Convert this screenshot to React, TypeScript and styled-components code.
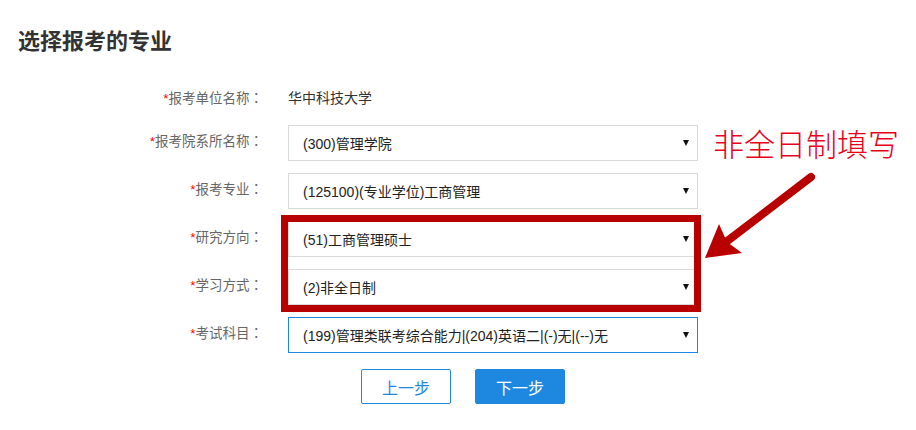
import React from "react";
import styled, { createGlobalStyle } from "styled-components";

const Global = createGlobalStyle`
  html, body { margin: 0; padding: 0; background: #fff; }
  body { font-family: "Liberation Sans", "Noto Sans CJK SC", sans-serif; }
`;

const Page = styled.div`
  position: relative;
  width: 916px;
  height: 430px;
  overflow: hidden;
`;

const Title = styled.h2`
  margin: 0;
  padding: 25px 0 0 18px;
  font-family: "Noto Sans CJK SC", sans-serif;
  font-size: 22px;
  line-height: 28px;
  font-weight: 700;
  color: #333;
`;

const Form = styled.div`
  display: flex;
  flex-direction: column;
  gap: 12px;
  margin-top: 27px;
`;

const Row = styled.div<{ $tight?: boolean }>`
  display: grid;
  grid-template-columns: 263px 410px;
  column-gap: 25px;
  align-items: center;
  height: 36px;
  margin-bottom: ${(p) => (p.$tight ? "-3px" : "0")};
`;

const Label = styled.div<{ $plain?: boolean }>`
  text-align: right;
  font-family: "Noto Sans CJK SC", sans-serif;
  font-size: 13.5px;
  color: #666;
  white-space: nowrap;
  padding-bottom: ${(p) => (p.$plain ? "2px" : "6px")};
`;

const Colon = styled.span`
  font-family: "Noto Sans CJK JP", sans-serif;
`;

const Star = styled.span`
  color: #f00;
  font-family: "Liberation Sans", sans-serif;
`;

const Value = styled.div`
  font-family: "Noto Sans CJK SC", sans-serif;
  font-size: 14px;
  color: #333;
  padding-bottom: 2px;
`;

const SelectBox = styled.div<{ $focus?: boolean }>`
  box-sizing: border-box;
  height: 36px;
  display: flex;
  align-items: center;
  justify-content: space-between;
  padding: 0 8px 0 14px;
  border: 1px solid ${(p) => (p.$focus ? "#1e88e5" : "#d9d9d9")};
  background: #fff;
  font-family: "Liberation Sans", "Noto Sans CJK SC", sans-serif;
  font-size: 14px;
  color: #222;
`;

const Caret = styled.span`
  width: 0;
  height: 0;
  border-left: 3.5px solid transparent;
  border-right: 3.5px solid transparent;
  border-top: 6px solid #111;
`;

const Buttons = styled.div`
  display: flex;
  gap: 24px;
  margin: 16px 0 0 361px;
`;

const Button = styled.button<{ $primary?: boolean }>`
  box-sizing: border-box;
  width: 90px;
  height: 35px;
  border-radius: 2px;
  border: 1px solid #1e88e0;
  background: ${(p) => (p.$primary ? "#1e88e0" : "#fff")};
  color: ${(p) => (p.$primary ? "#fff" : "#1e88e0")};
  font-family: "Noto Sans CJK SC", sans-serif;
  font-size: 16px;
  padding: 0;
  cursor: pointer;
`;

const Highlight = styled.div`
  position: absolute;
  left: 281px;
  top: 215px;
  width: 420px;
  height: 97px;
  box-sizing: border-box;
  border: 7px solid #b80000;
  pointer-events: none;
`;

const Note = styled.div`
  position: absolute;
  left: 713px;
  top: 126px;
  font-family: "Noto Sans CJK SC", sans-serif;
  font-size: 31px;
  line-height: 34px;
  font-weight: 300;
  color: #e8001a;
  white-space: nowrap;
`;

const ArrowSvg = styled.svg`
  position: absolute;
  left: 0;
  top: 0;
  pointer-events: none;
`;

const rows = [
  { label: "报考院系所名称", value: "(300)管理学院" },
  { label: "报考专业", value: "(125100)(专业学位)工商管理" },
  { label: "研究方向", value: "(51)工商管理硕士" },
  { label: "学习方式", value: "(2)非全日制" },
  { label: "考试科目", value: "(199)管理类联考综合能力|(204)英语二|(-)无|(--)无", focus: true },
];

export default function App() {
  return (
    <Page>
      <Global />
      <Title>选择报考的专业</Title>
      <Form>
        <Row $tight>
          <Label $plain>
            <Star>*</Star>报考单位名称<Colon>：</Colon>
          </Label>
          <Value>华中科技大学</Value>
        </Row>
        {rows.map((r) => (
          <Row key={r.label}>
            <Label>
              <Star>*</Star>
              {r.label}
              <Colon>：</Colon>
            </Label>
            <SelectBox $focus={r.focus}>
              <span>{r.value}</span>
              <Caret />
            </SelectBox>
          </Row>
        ))}
      </Form>
      <Buttons>
        <Button>上一步</Button>
        <Button $primary>下一步</Button>
      </Buttons>
      <Highlight />
      <Note>非全日制填写</Note>
      <ArrowSvg width="916" height="430" viewBox="0 0 916 430">
        <line x1="811" y1="177" x2="726" y2="242" stroke="#b80000" strokeWidth="8" strokeLinecap="round" />
        <polygon points="705,258 719,224 727,242 742,253" fill="#b80000" />
      </ArrowSvg>
    </Page>
  );
}
